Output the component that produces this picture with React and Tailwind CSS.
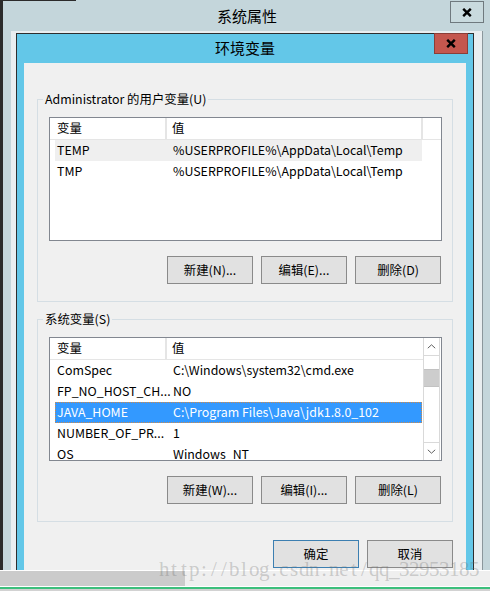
const CloseX = () => (
  <svg width="10" height="9" viewBox="0 0 10 9">
    <path d="M1.2 0.8 L8.8 8.2 M8.8 0.8 L1.2 8.2" stroke="#000" strokeWidth="2.4" fill="none" />
  </svg>
);

const Chevron = ({ down }) => (
  <svg width="9" height="5" viewBox="0 0 9 5">
    <path
      d={down ? "M0.8 0.8 L4.5 4.2 L8.2 0.8" : "M0.8 4.2 L4.5 0.8 L8.2 4.2"}
      stroke="#606060"
      strokeWidth="1"
      fill="none"
    />
  </svg>
);

function Group({ label, children }) {
  return (
    <div className="relative border border-[#d5dee4] pt-[17px] pl-[11px] pr-[10px] pb-[17px]">
      <span className="absolute left-[5px] top-[-9px] bg-[#f0f0f0] px-[2px] leading-[16px] whitespace-nowrap">
        {label}
      </span>
      {children}
    </div>
  );
}

function Btn({ children, primary }) {
  return (
    <div
      className={`w-[86px] h-[28px] flex items-center justify-center border bg-[#e1e1e1] ${
        primary ? "border-[#3c7fb1]" : "border-[#8a8a8a]"
      }`}
    >
      {children}
    </div>
  );
}

function Header({ trail }) {
  return (
    <div className="h-[22px] shrink-0 flex border-b border-[#e5e5e5]">
      <div className="w-[117px] shrink-0 pl-[7px] flex items-center border-r-2 border-[#e5e5e5]">变量</div>
      <div
        className={`w-[256px] shrink-0 pl-[5px] flex items-center ${trail ? "border-r-2 border-[#e5e5e5]" : ""}`}
      >
        值
      </div>
    </div>
  );
}

function Row({ a, b, tone }) {
  const look =
    tone === "sel"
      ? "bg-[#3399ff] text-white outline outline-1 outline-dotted outline-[#d08a48] -outline-offset-1"
      : tone === "hover"
      ? "bg-[#efefef]"
      : "";
  return (
    <div className={`h-[21px] shrink-0 ml-[5px] w-[367px] flex items-center ${look}`}>
      <div className="w-[116px] shrink-0 pl-[2px] whitespace-nowrap overflow-hidden">{a}</div>
      <div className="pl-[2px] whitespace-nowrap">{b}</div>
    </div>
  );
}

const watermark = "http://blog.csdn.net/qq_32953185";

export default function App() {
  return (
    <div className="relative w-[490px] h-[591px] overflow-hidden flex flex-col bg-[#c4d6db] font-['Noto_Sans_CJK_SC',sans-serif] text-[12.4px] text-black">
      <div className="absolute left-0 top-0 w-[76px] h-[1px] bg-[#2b2b2b]" />

      <div className="flex h-[570px] shrink-0 overflow-hidden">
        <div className="w-[3px] shrink-0 bg-[#2b2b2b]" />

        {/* 系统属性 */}
        <div className="flex-1 flex flex-col">
          <div className="relative h-[31px] shrink-0 flex items-center justify-center text-[15px] pt-[1px]">
            系统属性
            <div className="absolute right-[7px] top-[1px] w-[34px] h-[22px] border border-[#6f797e] bg-[#c9dade] flex items-center justify-center">
              <CloseX />
            </div>
          </div>

          <div className="flex-1 min-h-0 mx-[8px] border-r border-[#8b979c] bg-[#e9eef0] pl-[5px] pr-[8px] pt-[2px] flex flex-col">
            {/* 环境变量 */}
            <div className="relative flex-1 min-h-0 flex flex-col border border-b-0 border-[#2e2e2e] bg-[#63c7e8] px-[7px]">
              <div className="h-[29px] shrink-0 flex items-center justify-center text-[15px]">环境变量</div>
              <div className="absolute right-[5px] top-[-1px] w-[34px] h-[21px] border border-[#8a3e38] bg-[#c4574e] flex items-center justify-center">
                <CloseX />
              </div>

              <div className="flex-1 min-h-0 overflow-hidden bg-[#f0f0f0] px-[13px] pt-[36px] flex flex-col">
                <Group label="Administrator 的用户变量(U)">
                  <div className="h-[124px] border border-[#828790] bg-white flex flex-col overflow-hidden">
                    <Header trail />
                    <Row a="TEMP" b="%USERPROFILE%\AppData\Local\Temp" tone="hover" />
                    <Row a="TMP" b="%USERPROFILE%\AppData\Local\Temp" />
                  </div>
                  <div className="mt-[15px] flex justify-end gap-[8px] pr-[1px]">
                    <Btn>新建(N)...</Btn>
                    <Btn>编辑(E)...</Btn>
                    <Btn>删除(D)</Btn>
                  </div>
                </Group>

                <div className="mt-[17px]">
                  <Group label="系统变量(S)">
                    <div className="h-[124px] border border-[#828790] bg-white flex overflow-hidden">
                      <div className="flex-1 min-w-0 flex flex-col overflow-hidden">
                        <Header />
                        <Row a="ComSpec" b="C:\Windows\system32\cmd.exe" />
                        <Row a="FP_NO_HOST_CH..." b="NO" />
                        <Row a="JAVA_HOME" b="C:\Program Files\Java\jdk1.8.0_102" tone="sel" />
                        <Row a="NUMBER_OF_PR..." b="1" />
                        <Row a="OS" b="Windows_NT" />
                      </div>
                      <div className="w-[17px] shrink-0 mr-[1px] flex flex-col border-x border-[#d9d9d9] bg-white">
                        <div className="h-[18px] shrink-0 flex items-center justify-center border-b border-[#d9d9d9]">
                          <Chevron />
                        </div>
                        <div className="mt-[13px] h-[18px] shrink-0 bg-[#cdcdcd] border-y border-[#c2c2c2]" />
                        <div className="flex-1" />
                        <div className="h-[18px] shrink-0 flex items-center justify-center border-t border-[#d9d9d9]">
                          <Chevron down />
                        </div>
                      </div>
                    </div>
                    <div className="mt-[15px] flex justify-end gap-[8px] pr-[1px]">
                      <Btn>新建(W)...</Btn>
                      <Btn>编辑(I)...</Btn>
                      <Btn>删除(L)</Btn>
                    </div>
                  </Group>
                </div>

                <div className="mt-[18px] flex justify-end gap-[8px]">
                  <Btn primary>确定</Btn>
                  <Btn>取消</Btn>
                </div>
              </div>
            </div>
          </div>
        </div>
      </div>

      {/* taskbar strip below */}
      <div className="h-[21px] shrink-0 flex flex-col">
        <div className="h-[1px] bg-white" />
        <div className="h-[15px] flex">
          <div className="w-[185px] bg-[#cbcbcb]" />
          <div className="flex-1 bg-[#efefef]" />
        </div>
        <div className="h-[1px] bg-white" />
        <div className="h-[2px] bg-[#3cbf7c]" />
        <div className="flex-1 bg-[#d2d2d2]" />
      </div>

      {/* watermark */}
      <div className="absolute left-[159px] top-[557px] flex font-['Liberation_Serif',serif] text-[21px] leading-[24px] text-[rgba(110,110,110,0.3)] pointer-events-none">
        {watermark.split("").map((ch, i) => (
          <span key={i} className="w-[10px] text-center inline-block">
            {ch}
          </span>
        ))}
      </div>
    </div>
  );
}
